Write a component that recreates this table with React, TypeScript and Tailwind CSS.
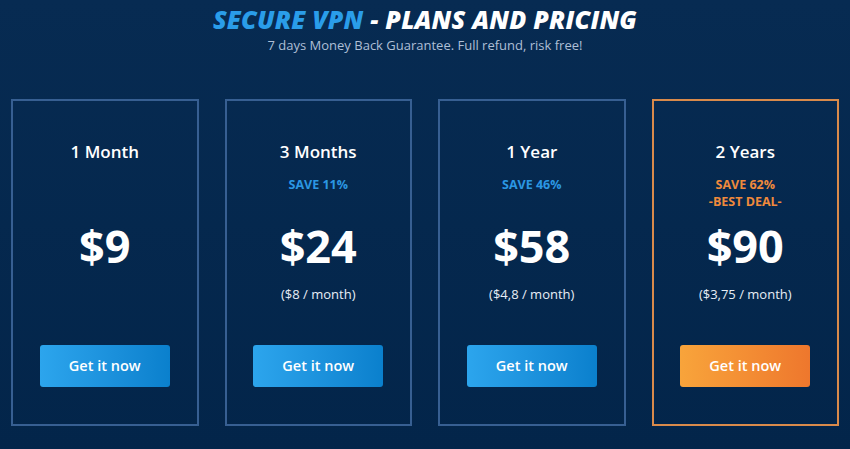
const plans = [
  { name: '1 Month', save: [] as string[], price: '$9', perMonth: '', best: false },
  { name: '3 Months', save: ['SAVE 11%'], price: '$24', perMonth: '($8 / month)', best: false },
  { name: '1 Year', save: ['SAVE 46%'], price: '$58', perMonth: '($4,8 / month)', best: false },
  { name: '2 Years', save: ['SAVE 62%', '-BEST DEAL-'], price: '$90', perMonth: '($3,75 / month)', best: true },
];

export default function App() {
  return (
    <div
      className="w-[850px] h-[449px] overflow-hidden bg-gradient-to-b from-[#072b52] to-[#03254a] text-white"
      style={{ fontFamily: '"Open Sans", "Liberation Sans", sans-serif' }}
    >
      {/* Header */}
      <div className="flex flex-col items-center pt-[4px]">
        <h1 className="text-[25px] leading-[30px] font-extrabold italic tracking-[0.2px] whitespace-nowrap">
          <span className="text-[#2a9de9]">SECURE VPN</span>
          <span className="text-white"> - PLANS AND PRICING</span>
        </h1>
        <p className="mt-[2px] text-[13px] leading-[18px] text-[#aebfd6]">
          7 days Money Back Guarantee. Full refund, risk free!
        </p>
      </div>

      {/* Cards */}
      <div className="flex gap-[26px] px-[11px] mt-[45px]">
        {plans.map((p) => (
          <PlanCard key={p.name} {...p} />
        ))}
      </div>
    </div>
  );
}

function PlanCard({
  name,
  save,
  price,
  perMonth,
  best,
}: {
  name: string;
  save: string[];
  price: string;
  perMonth: string;
  best: boolean;
}) {
  return (
    <div
      className={
        best
          ? 'w-[188px] h-[327px] border-2 border-[#d98a4b] flex flex-col items-center pt-[39px]'
          : 'w-[188px] h-[327px] border-2 border-[#375f92] flex flex-col items-center pt-[39px]'
      }
    >
      <div className="text-[17px] leading-[24px] font-semibold">{name}</div>
      <div
        className={
          best
            ? 'mt-[12px] h-[34px] flex flex-col items-center text-[12.5px] leading-[17px] font-bold text-[#f08a3c]'
            : 'mt-[12px] h-[34px] flex flex-col items-center text-[12.5px] leading-[17px] font-bold text-[#2b97e3]'
        }
      >
        {save.map((s) => (
          <span key={s}>{s}</span>
        ))}
      </div>
      <div className="mt-[10px] text-[45px] leading-[52px] font-bold">{price}</div>
      <div className="mt-[12px] h-[20px] text-[13px] leading-[20px] text-[#e8eef6]">{perMonth}</div>
      <button
        className={
          best
            ? 'mt-[41px] w-[130px] h-[42px] rounded-[3px] bg-gradient-to-r from-[#f8a43b] to-[#ee772d] text-[14.5px] font-semibold text-white'
            : 'mt-[41px] w-[130px] h-[42px] rounded-[3px] bg-gradient-to-r from-[#2ca5ed] to-[#0a80cd] text-[14.5px] font-semibold text-white'
        }
      >
        Get it now
      </button>
    </div>
  );
}
